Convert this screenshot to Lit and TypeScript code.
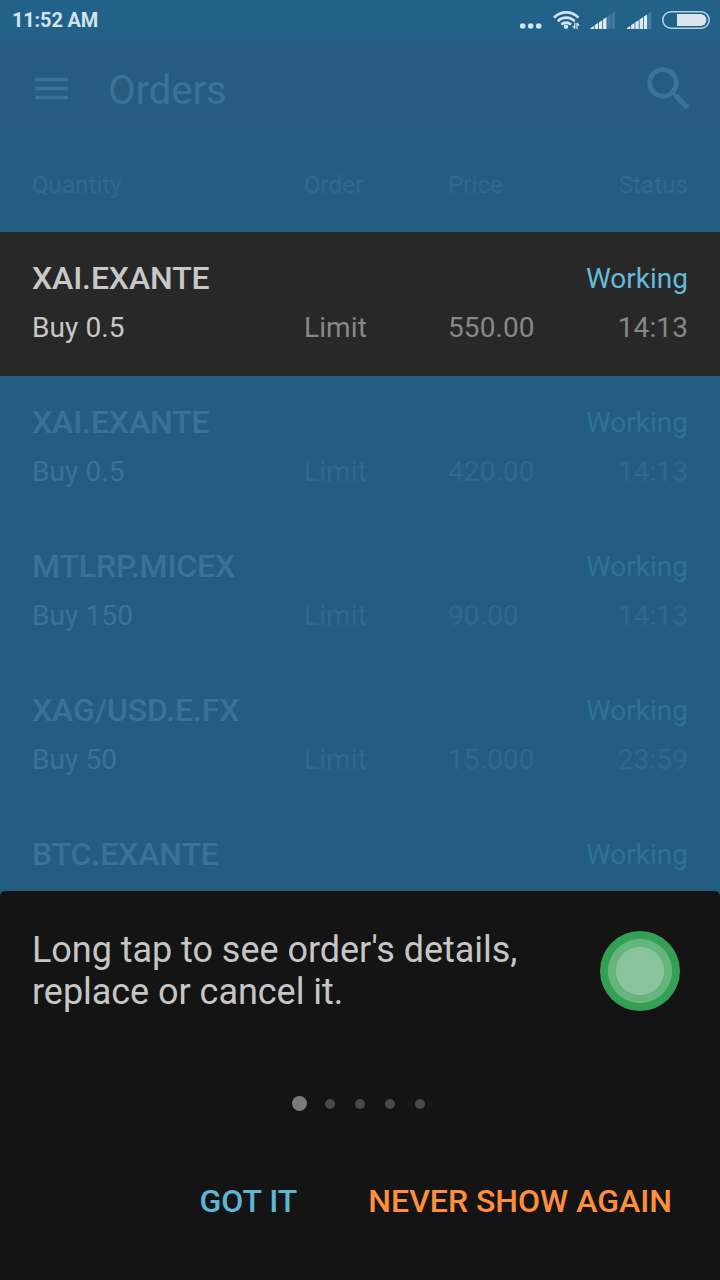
import { LitElement, html, css, svg, nothing } from "lit";
import { customElement, property } from "lit/decorators.js";

interface Order {
  symbol: string;
  quantity?: string;
  type?: string;
  price?: string;
  time?: string;
  active?: boolean;
}

const ORDERS: Order[] = [
  { symbol: "XAI.EXANTE", quantity: "Buy 0.5", type: "Limit", price: "550.00", time: "14:13", active: true },
  { symbol: "XAI.EXANTE", quantity: "Buy 0.5", type: "Limit", price: "420.00", time: "14:13" },
  { symbol: "MTLRP.MICEX", quantity: "Buy 150", type: "Limit", price: "90.00", time: "14:13" },
  { symbol: "XAG/USD.E.FX", quantity: "Buy 50", type: "Limit", price: "15.000", time: "23:59" },
  { symbol: "BTC.EXANTE" },
];

@customElement("status-bar")
class StatusBar extends LitElement {
  static styles = css`
    :host {
      display: flex;
      align-items: center;
      justify-content: space-between;
      height: 40px;
      flex: none;
      padding-left: 12px;
      background: #226188;
      color: #d3e4ee;
      font-weight: 700;
      font-size: 20px;
      line-height: 24px;
      letter-spacing: -0.17px;
    }
    .icons { display: block; }
  `;
  signal(x: number, lit: number) {
    return [0, 1, 2, 3, 4, 5].map((i) => {
      const left = x + i * 4.2;
      const top = 28 - i * 2.9;
      return svg`<path d="M${left} 29V${top}l3.400 -2V29z" fill=${i < lit ? "#e0ebf1" : "#427a9f"} />`;
    });
  }
  render() {
    return html`
      <span>11:52 AM</span>
      <svg class="icons" width="210" height="40" viewBox="510 0 210 40">
        <g fill="#cfe6ef">
          <circle cx="522.7" cy="26" r="2.8" />
          <circle cx="530.7" cy="26" r="2.8" />
          <circle cx="538.7" cy="26" r="2.8" />
        </g>
        <g fill="none" stroke="#cfe6f2" stroke-width="2.7">
          <path d="M554 17.600a16.800 16.800 0 0 1 24.400 0" />
          <path d="M557.800 21.200a11.600 11.600 0 0 1 16.800 0" />
          <path d="M561.400 24.600a6.600 6.600 0 0 1 9.600 0" />
        </g>
        <circle cx="566" cy="26.8" r="2.2" fill="#cfe6f2" />
        <path d="M573 22h7v8h-7z" fill="#226188" />
        <path d="M574.800 22.500v6M572.800 26l2 2.500M577 29v-6M579 25.500l-2-2.500" stroke="#cfe6f2" stroke-width="1.300" fill="none" />
        ${this.signal(590.5, 4)} ${this.signal(627, 5)}
        <rect x="662.8" y="11.8" width="46.4" height="16.4" rx="8.2" fill="none" stroke="#b4d2e5" stroke-width="1.6" />
        <path d="M677 14h23.500a6 6 0 0 1 0 12H677z" fill="#d9e4ec" />
      </svg>
    `;
  }
}

@customElement("app-bar")
class AppBar extends LitElement {
  static styles = css`
    :host {
      display: flex;
      align-items: center;
      height: 96px;
      flex: none;
      padding: 0 22px 0 30px;
      background: #255c7f;
      color: #3b7397;
      font-size: 40px;
      line-height: 48px;
      box-sizing: border-box;
    }
    .title { flex: 1; margin-left: 35px; padding-top: 6px; }
    svg { display: block; fill: currentColor; }
    .search { margin-top: 1px; }
  `;
  render() {
    return html`
      <svg width="43" height="43" viewBox="0 0 24 24"><path d="M3 6h18v2H3zM3 11h18v2H3zM3 16h18v2H3z" /></svg>
      <div class="title">Orders</div>
      <svg class="search" width="58" height="58" viewBox="0 0 24 24">
        <path d="M15.5 14h-.79l-.28-.27A6.471 6.471 0 0 0 16 9.500 6.500 6.500 0 1 0 9.500 16c1.610 0 3.090-.59 4.230-1.570l.27.28v.79l5 4.990L20.490 19l-4.990-5zm-6 0C7.010 14 5 11.990 5 9.500S7.010 5 9.500 5 14 7.010 14 9.500 11.990 14 9.500 14z" />
      </svg>
    `;
  }
}

@customElement("order-row")
class OrderRow extends LitElement {
  @property({ attribute: false }) order!: Order;
  static styles = css`
    :host {
      display: block;
      height: 144px;
      flex: none;
      box-sizing: border-box;
      padding: 27px 32px 0;
      font-size: 28px;
      line-height: 33px;
      color: #3a7297;
    }
    :host([active]) { background: #282828; color: #c8c8c8; }
    .top { display: flex; justify-content: space-between; line-height: 38px; }
    .symbol { font-size: 32px; font-weight: 500; letter-spacing: -0.12px; }
    .status { color: #2a7298; padding-top: 1px; }
    .bottom {
      display: grid;
      grid-template-columns: 272px 144px 1fr auto;
      margin-top: 13px;
      letter-spacing: 0.1px;
    }
    .dim { color: #2e688c; }
    :host([active]) .status { color: #63bbda; }
    :host([active]) .dim { color: #878787; }
  `;
  render() {
    const o = this.order;
    return html`
      <div class="top"><span class="symbol">${o.symbol}</span><span class="status">Working</span></div>
      ${o.quantity
        ? html`<div class="bottom">
            <span>${o.quantity}</span><span class="dim">${o.type}</span>
            <span class="dim">${o.price}</span><span class="dim">${o.time}</span>
          </div>`
        : nothing}
    `;
  }
}

@customElement("hint-sheet")
class HintSheet extends LitElement {
  static styles = css`
    :host {
      display: flex;
      flex-direction: column;
      height: 389px;
      flex: none;
      box-sizing: border-box;
      padding: 38px 40px 0 32px;
      background: #141414;
      border-radius: 5px 5px 0 0;
      color: #c6c6c6;
    }
    .message {
      display: flex;
      justify-content: space-between;
      font-size: 36px;
      line-height: 42px;
      height: 84px;
      letter-spacing: -0.04px;
    }
    .tap {
      width: 80px;
      height: 80px;
      margin-top: 2px;
      border-radius: 50%;
      background: radial-gradient(circle, #8ac49c 23.6px, #66b57e 24.4px 31.6px, #33a053 32.4px);
    }
    .dots { display: flex; justify-content: center; align-items: center; gap: 20px; height: 15px; margin: 83px 0 0 5px; }
    .dot { width: 10px; height: 10px; border-radius: 50%; background: #484848; }
    .dot.on { width: 15px; height: 15px; margin-right: -2.5px; background: #7b7b7b; }
    .actions {
      display: flex;
      justify-content: flex-end;
      gap: 71px;
      margin: 70px 8px 0 0;
      font-size: 32px;
      font-weight: 500;
      line-height: 40px;
    }
    .ok { color: #5eb6d2; }
    .never { color: #ff8f3f; }
  `;
  render() {
    return html`
      <div class="message">
        <div>Long tap to see order's details,<br />replace or cancel it.</div>
        <div class="tap"></div>
      </div>
      <div class="dots">
        <i class="dot on"></i><i class="dot"></i><i class="dot"></i><i class="dot"></i><i class="dot"></i>
      </div>
      <div class="actions"><span class="ok">GOT IT</span><span class="never">NEVER SHOW AGAIN</span></div>
    `;
  }
}

@customElement("app-root")
class AppRoot extends LitElement {
  static styles = css`
    :host {
      display: flex;
      flex-direction: column;
      width: 720px;
      height: 1280px;
      overflow: hidden;
      background: #255d80;
      font-family: Roboto, sans-serif;
    }
    .columns {
      display: grid;
      grid-template-columns: 272px 144px 1fr auto;
      height: 96px;
      flex: none;
      box-sizing: border-box;
      padding: 35px 32px 0;
      font-size: 24px;
      line-height: 28px;
      letter-spacing: 0.1px;
      color: #2f698d;
    }
    .list { flex: 1; min-height: 0; overflow: hidden; }
  `;
  render() {
    return html`
      <status-bar></status-bar>
      <app-bar></app-bar>
      <div class="columns"><span>Quantity</span><span>Order</span><span>Price</span><span>Status</span></div>
      <div class="list">
        ${ORDERS.map((o) => html`<order-row .order=${o} ?active=${!!o.active}></order-row>`)}
      </div>
      <hint-sheet></hint-sheet>
    `;
  }
}
